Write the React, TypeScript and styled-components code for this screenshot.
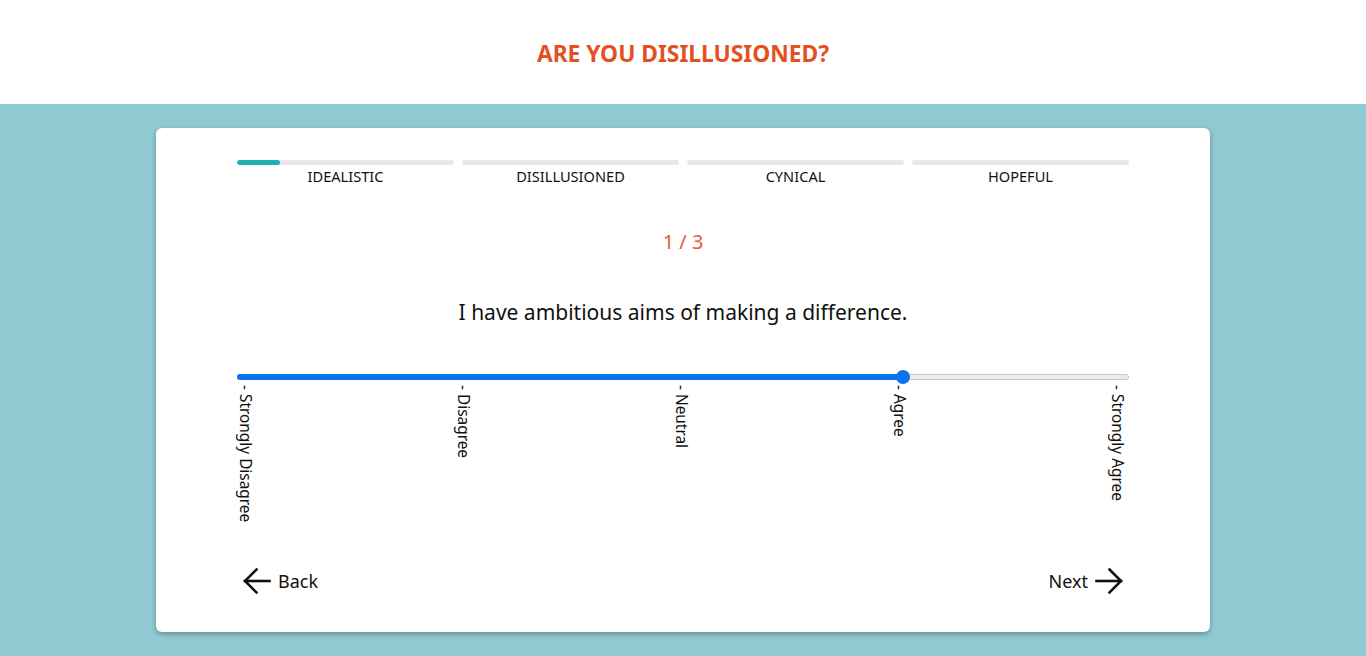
import React from "react";
import styled, { createGlobalStyle } from "styled-components";

const Global = createGlobalStyle`
  html, body { margin: 0; padding: 0; }
  body {
    font-family: "Noto Sans", "Open Sans", sans-serif;
    background: #8fc9d1;
    color: #111;
  }
`;

const Page = styled.div`
  min-height: 656px;
  display: flex;
  flex-direction: column;
`;

const Header = styled.header`
  height: 104px;
  background: #fff;
  display: flex;
  align-items: center;
  justify-content: center;
`;

const Title = styled.h1`
  margin: 0;
  font-size: 22.8px;
  line-height: 30px;
  font-weight: 700;
  color: #e5501e;
  padding-top: 3px;
`;

const Main = styled.main`
  display: flex;
  justify-content: center;
  padding-top: 24px;
`;

const Card = styled.section`
  width: 1054px;
  height: 504px;
  box-sizing: border-box;
  background: #fff;
  border-radius: 6px;
  box-shadow: 0 2px 5px rgba(0, 0, 0, 0.3);
  padding: 32px 81px 0 81px;
  display: flex;
  flex-direction: column;
`;

const Steps = styled.div`
  display: grid;
  grid-template-columns: repeat(4, 1fr);
  column-gap: 8px;
`;

const Step = styled.div`
  display: flex;
  flex-direction: column;
  align-items: center;
  gap: 3px;
`;

const StepBar = styled.div`
  width: 100%;
  height: 5px;
  border-radius: 3px;
  background: #e9e9e9;
  overflow: hidden;
`;

const StepFill = styled.div`
  height: 100%;
  background: #1eafb5;
  border-radius: 3px;
`;

const StepLabel = styled.span`
  font-size: 14.6px;
  line-height: 16px;
  text-transform: uppercase;
  color: #111;
`;

const Counter = styled.div`
  margin-top: 45px;
  text-align: center;
  font-size: 20px;
  line-height: 26px;
  color: #e8593f;
`;

const Question = styled.p`
  margin: 44px 0 0;
  text-align: center;
  font-size: 21px;
  line-height: 26px;
  color: #111;
`;

const SliderWrap = styled.div`
  margin-top: 45px;
  position: relative;
  height: 14px;
  display: flex;
  align-items: center;
`;

const Track = styled.div`
  width: 100%;
  height: 6px;
  box-sizing: border-box;
  border-radius: 3px;
  background: #ececec;
  border: 1px solid #c6c6c6;
  position: relative;
`;

const Fill = styled.div`
  position: absolute;
  left: -1px;
  top: -1px;
  bottom: -1px;
  background: #0a72ee;
  border-radius: 3px;
`;

const Thumb = styled.div`
  position: absolute;
  top: 0;
  width: 14px;
  height: 14px;
  margin-left: -7px;
  border-radius: 50%;
  background: #0a72ee;
`;

const Ticks = styled.div`
  display: flex;
  justify-content: space-between;
  margin: 1px 4px 0 0;
  height: 136px;
`;

const Tick = styled.span`
  writing-mode: vertical-rl;
  width: 16px;
  font-size: 15.4px;
  line-height: 16px;
  color: #111;
  white-space: nowrap;
`;

const Nav = styled.div`
  margin-top: 46px;
  display: flex;
  justify-content: space-between;
  align-items: center;
  padding: 0 6px 0 6px;
`;

const NavButton = styled.button`
  display: flex;
  align-items: center;
  gap: 7px;
  background: none;
  border: none;
  padding: 0;
  font-family: inherit;
  font-size: 18px;
  color: #111;
  cursor: pointer;
`;

const Arrow = ({ dir }: { dir: "left" | "right" }) => (
  <svg width="28" height="28" viewBox="0 0 28 28" fill="none" stroke="#111" strokeWidth="2.6" strokeLinecap="square">
    {dir === "left" ? (
      <>
        <path d="M2 14 H26.5" />
        <path d="M13.5 2.5 L2 14 L13.5 25.5" />
      </>
    ) : (
      <>
        <path d="M1.5 14 H26" />
        <path d="M14.5 2.5 L26 14 L14.5 25.5" />
      </>
    )}
  </svg>
);

const steps = [
  { label: "Idealistic", progress: 20 },
  { label: "Disillusioned", progress: 0 },
  { label: "Cynical", progress: 0 },
  { label: "Hopeful", progress: 0 },
];

const ticks = ["Strongly Disagree", "Disagree", "Neutral", "Agree", "Strongly Agree"];

export default function App() {
  const value = 3;
  const pct = value / (ticks.length - 1);
  const pos = `calc(7px + (100% - 14px) * ${pct})`;
  return (
    <Page>
      <Global />
      <Header>
        <Title>ARE YOU DISILLUSIONED?</Title>
      </Header>
      <Main>
        <Card>
          <Steps>
            {steps.map((s) => (
              <Step key={s.label}>
                <StepBar>
                  <StepFill style={{ width: `${s.progress}%` }} />
                </StepBar>
                <StepLabel>{s.label}</StepLabel>
              </Step>
            ))}
          </Steps>
          <Counter>1 / 3</Counter>
          <Question>I have ambitious aims of making a difference.</Question>
          <SliderWrap>
            <Track>
              <Fill style={{ width: pos }} />
            </Track>
            <Thumb style={{ left: pos }} />
          </SliderWrap>
          <Ticks>
            {ticks.map((t) => (
              <Tick key={t}>- {t}</Tick>
            ))}
          </Ticks>
          <Nav>
            <NavButton>
              <Arrow dir="left" />
              Back
            </NavButton>
            <NavButton>
              Next
              <Arrow dir="right" />
            </NavButton>
          </Nav>
        </Card>
      </Main>
    </Page>
  );
}
